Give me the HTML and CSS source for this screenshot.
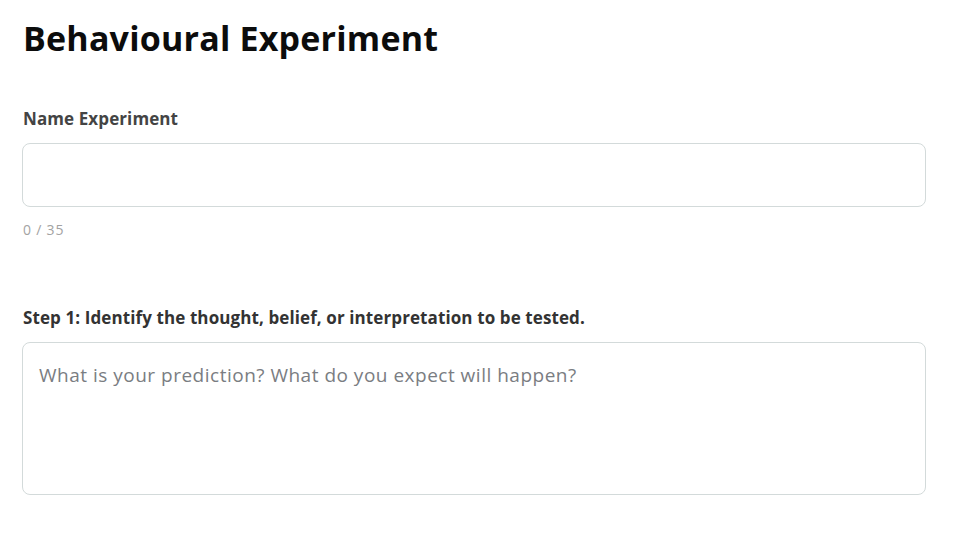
FILE: index.html
```html
<!DOCTYPE html>
<html lang="en">

<head>
  <meta charset="UTF-8">
  <title>Behavioural Experiment</title>
  <link rel="stylesheet" href="styles.css">
</head>

<body>
  <div class="page">
    <h1 class="title">Behavioural Experiment</h1>

    <div class="field">
      <label class="label" for="name">Name Experiment</label>
      <input class="input" type="text" id="name" maxlength="35">
      <div class="counter">0 / 35</div>
    </div>

    <div class="field step">
      <label class="label" for="step1">Step 1: Identify the thought, belief, or interpretation to be tested.</label>
      <textarea class="textarea" id="step1" placeholder="What is your prediction? What do you expect will happen?"></textarea>
    </div>
  </div>
</body>

</html>
```
FILE: styles.css
```css
body {
  margin: 0;
  background: #ffffff;
  font-family: "Open Sans", "Noto Sans", sans-serif;
  color: #111111;
}

.page {
  padding: 14px 29px 0 22px;
}

.title {
  margin: 0 0 47px 1px;
  font-size: 34px;
  font-weight: 700;
  line-height: 48px;
  letter-spacing: 0.2px;
  color: #0c0c0c;
}

.field {
  display: flex;
  flex-direction: column;
}

.label {
  margin: 0 0 14px 1px;
  font-size: 17px;
  font-weight: 700;
  line-height: 20px;
  letter-spacing: 0.1px;
  color: #444444;
}

.input {
  box-sizing: border-box;
  height: 64px;
  padding: 0 16px;
  border: 1px solid #d3dada;
  border-radius: 8px;
  font: inherit;
  font-size: 18px;
  outline: none;
}

.counter {
  margin: 15px 0 0 1px;
  font-size: 14px;
  line-height: 16px;
  letter-spacing: 0.8px;
  color: #a3a3a3;
}

.step {
  margin-top: 70px;
}

.step .label {
  color: #333333;
}

.textarea {
  box-sizing: border-box;
  height: 153px;
  padding: 20px 16px;
  border: 1px solid #d3dada;
  border-radius: 8px;
  font: inherit;
  font-size: 19px;
  line-height: 24px;
  letter-spacing: 0.5px;
  color: #333333;
  resize: none;
  outline: none;
}

.textarea::placeholder {
  color: #7a7d82;
}
```
